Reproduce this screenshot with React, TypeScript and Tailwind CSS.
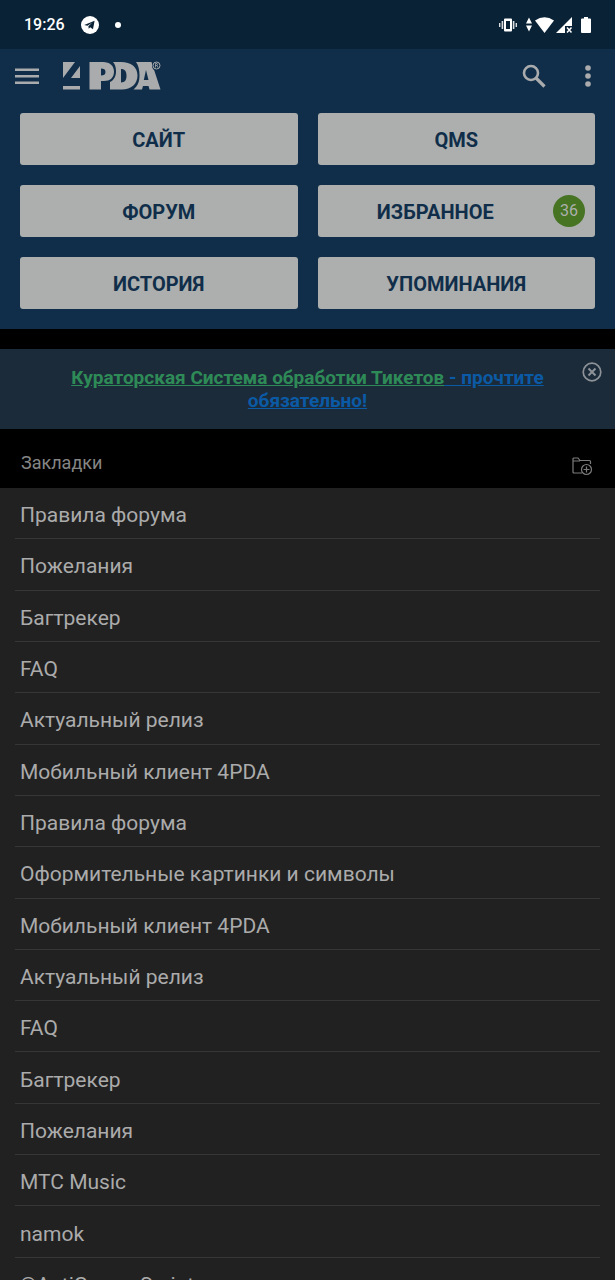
const tiles = [
  { label: 'САЙТ' },
  { label: 'QMS' },
  { label: 'ФОРУМ' },
  { label: 'ИЗБРАННОЕ', count: 36 },
  { label: 'ИСТОРИЯ' },
  { label: 'УПОМИНАНИЯ' },
];

const bookmarks = [
  'Правила форума',
  'Пожелания',
  'Багтрекер',
  'FAQ',
  'Актуальный релиз',
  'Мобильный клиент 4PDA',
  'Правила форума',
  'Оформительные картинки и символы',
  'Мобильный клиент 4PDA',
  'Актуальный релиз',
  'FAQ',
  'Багтрекер',
  'Пожелания',
  'МТС Music',
  'namok',
  '©AntiGamesScript',
];

function StatusBar() {
  return (
    <div className="flex h-[49px] shrink-0 items-center bg-[#0a2236] pl-6 pr-[22px] text-white">
      <span className="text-base font-medium">19:26</span>
      <svg className="ml-4" width="18" height="18" viewBox="0 0 18 18">
        <circle cx="9" cy="9" r="9" fill="currentColor" />
        <path d="M3.2 8.9 13.6 4.7 12 13.3 9.2 11.2 7.7 12.7 7.4 10.2 11.3 6.6 6.5 9.7Z" fill="#0a2236" />
      </svg>
      <span className="ml-4 size-[6px] rounded-full bg-white" />
      <svg className="ml-auto" width="94" height="18" viewBox="0 0 94 18" fill="currentColor">
        {/* vibrate */}
        <path d="M0 7h1.4v4H0zM2.6 5h1.6v8H2.6zM16.6 7H18v4h-1.4zM13.8 5h1.6v8h-1.6z" opacity=".85" />
        <path fillRule="evenodd" d="M6 2.5h6a1 1 0 0 1 1 1v11a1 1 0 0 1-1 1H6a1 1 0 0 1-1-1v-11a1 1 0 0 1 1-1ZM7 5v8h4V5Z" />
        {/* data arrows and wifi */}
        <path d="M30 1.5 33 7.5H27ZM30 15.5 27 9.5H33Z" />
        <path d="M36 4.5Q45.5-2 55 4.5L45.5 17Z" />
        {/* mobile signal without network */}
        <path d="M73 1V10H66V17H57Z" />
        <path d="m68 11.5 4.5 5m0-5-4.5 5" stroke="currentColor" strokeWidth="1.5" />
        {/* battery */}
        <path d="M85 1h4v1.5h2a1 1 0 0 1 1 1V16a1 1 0 0 1-1 1h-8a1 1 0 0 1-1-1V3.5a1 1 0 0 1 1-1h2Z" />
      </svg>
    </div>
  );
}

function Logo() {
  return (
    <svg width="98" height="30" viewBox="0 0 98 30" fill="#a9abac" aria-label="4PDA" role="img">
      <path d="M0 1H12L0 17ZM17 5V17H8ZM0 25H17V28.5H0Z" />
      <path fillRule="evenodd" d="M26.5 1H40C47 1 51 5 51 10.5C51 17 47 20 41 20H38V28.5H26.5ZM38 7.5V14.5C41 14.5 42.5 13.5 42.5 11C42.5 8.5 41 7.5 38 7.5Z" />
      <path fillRule="evenodd" d="M50 1H58C68 1 74.5 6 74.5 14.5C74.5 23 68 28.5 59 28.5H47V21C51 19 53 15 53 10.5C53 6.5 52 3 50 1ZM58 8V21.5C62 21.5 63.5 19 63.5 14.8C63.5 10.5 62 8 58 8Z" />
      <path fillRule="evenodd" d="M73 1H88.5L97.5 28.5H86.5L85.5 25H80L79 28.5H70.5C75 25 76.5 20 76.5 14.5C76.5 9 75.5 4.5 73 1ZM83 9L80.8 19H85.5Z" />
      <circle cx="93.5" cy="5" r="4.5" fill="#102e4a" />
      <g fill="none" stroke="#a9abac" strokeWidth="1">
        <circle cx="93.5" cy="4.5" r="3.5" />
        <path d="M92.5 6.5V2.5H94Q95 3.5 94 4.5H92.5M94 4.5 95 6.5" strokeWidth=".8" />
      </g>
    </svg>
  );
}

export default function App() {
  return (
    <div className="flex h-screen flex-col overflow-hidden bg-black font-[Roboto,sans-serif]">
      <StatusBar />

      <header className="shrink-0 bg-[#102e4a] pb-5 text-[#a9abac]">
        <div className="flex h-16 items-center pb-[10px] pl-[15px] pr-[21px]">
          <button type="button" aria-label="Меню">
            <svg width="24" height="18" viewBox="0 0 24 18" fill="currentColor">
              <path d="M0 1.5h24V4H0zM0 8h24v2.5H0zM0 14.5h24V17H0z" />
            </svg>
          </button>
          <div className="ml-6">
            <Logo />
          </div>
          <button type="button" aria-label="Поиск" className="ml-auto">
            <svg width="24" height="24" viewBox="0 0 24 24" fill="none" stroke="currentColor">
              <circle cx="9" cy="9" r="7" strokeWidth="2.6" />
              <path d="m14 14 8.5 8.5" strokeWidth="3.2" />
            </svg>
          </button>
          <button type="button" aria-label="Ещё" className="ml-9">
            <svg width="12" height="24" viewBox="0 0 12 24" fill="currentColor">
              <circle cx="6" cy="4" r="2.8" />
              <circle cx="6" cy="12" r="2.8" />
              <circle cx="6" cy="20" r="2.8" />
            </svg>
          </button>
        </div>
        <nav className="grid grid-cols-2 gap-5 px-5">
          {tiles.map((tile) => (
            <button
              key={tile.label}
              type="button"
              className="flex h-[52px] items-center gap-[10px] rounded-[3px] bg-[#acafae] px-[10px] text-xl font-bold text-[#102e4a]"
            >
              <span className="flex-1 pt-[2px]">{tile.label}</span>
              {tile.count && (
                <span className="flex size-8 items-center justify-center rounded-full bg-[#477423] text-base font-normal text-[#acafae]">
                  {tile.count}
                </span>
              )}
            </button>
          ))}
        </nav>
      </header>

      <section className="mt-5 flex h-20 shrink-0 items-start bg-[#1c2b39] pl-[46px] pr-[13px] pt-[13px]">
        <p className="flex-1 px-5 pt-1 text-center text-[19px] font-bold leading-[23px]">
          <a href="#tickets" className="text-[#0b5aa6] underline">
            <span className="text-[#2e8b57] underline">Кураторская Система обработки Тикетов</span> - прочтите обязательно!
          </a>
        </p>
        <button type="button" aria-label="Закрыть" className="ml-[13px] text-[#8c9298]">
          <svg width="20" height="20" viewBox="0 0 20 20" fill="none" stroke="currentColor">
            <circle cx="10" cy="10" r="8.8" strokeWidth="1.7" />
            <path d="m6.5 6.5 7 7m0-7-7 7" strokeWidth="2" />
          </svg>
        </button>
      </section>

      <div className="flex h-[59px] shrink-0 items-center justify-between pl-[21px] pr-[22px] pt-2">
        <h2 className="text-lg text-[#858585]">Закладки</h2>
        <button type="button" aria-label="Добавить папку" className="mt-2 text-[#7c7c7c]">
          <svg width="21" height="19" viewBox="0 0 21 19" fill="none" stroke="currentColor" strokeWidth="1.2">
            <path d="M10 16H2Q1 16 1 15V2Q1 1 2 1H6L8 3.5H17.5Q18.5 3.5 18.5 4.5V7M1 4H8" />
            <circle cx="14.5" cy="12.5" r="5" />
            <path d="M14.5 9.5v6M11.5 12.5h6" />
          </svg>
        </button>
      </div>

      <main className="min-h-0 flex-1 overflow-y-auto bg-[#212121] px-[15px] [scrollbar-width:none]">
        <ul className="grid min-h-[821px] auto-rows-fr">
          {bookmarks.map((title, i) => (
            <li key={i} className="border-b border-[#363636]">
              <a href="#bookmark" className="flex h-full items-center px-[5px] pt-1 text-[21px] leading-7 text-[#ababab]">
                {title}
              </a>
            </li>
          ))}
        </ul>
      </main>
    </div>
  );
}
